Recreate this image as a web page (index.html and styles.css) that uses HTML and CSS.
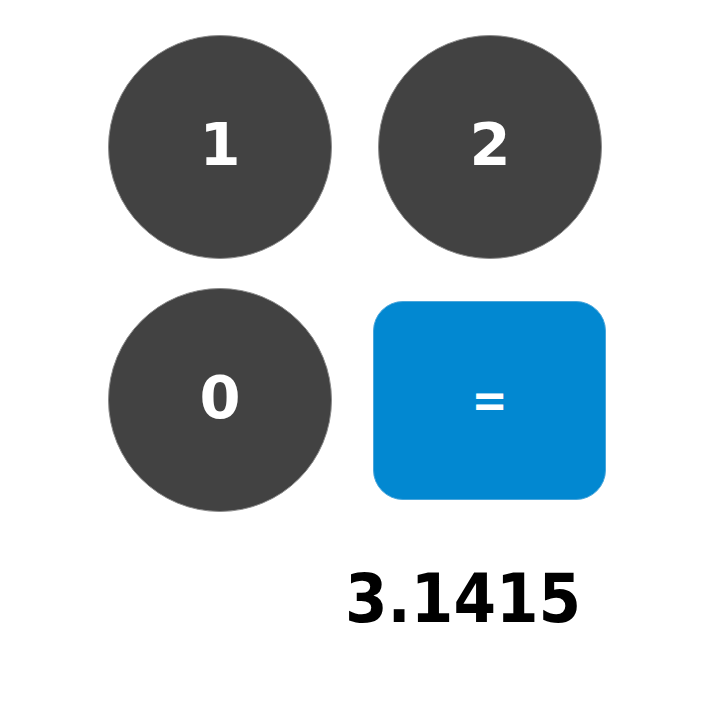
FILE: index.html
```html
<!DOCTYPE html>
<html>
<head>
<meta charset="utf-8">
<link rel="stylesheet" href="styles.css">
</head>
<body>
<div class="calc">
  <div class="row">
    <button class="key num">1</button>
    <button class="key num">2</button>
  </div>
  <div class="row">
    <button class="key num">0</button>
    <button class="key eq">=</button>
  </div>
  <div class="result">3.1415</div>
</div>
</body>
</html>
```
FILE: styles.css
```css
html, body {
  margin: 0;
  padding: 0;
  background: #ffffff;
}
.calc {
  padding: 35px 0 0 108px;
  display: flex;
  flex-direction: column;
  gap: 29px;
  font-family: "DejaVu Sans Condensed", "DejaVu Sans", sans-serif;
}
.row {
  display: flex;
  gap: 46px;
  align-items: center;
}
.key {
  margin: 0;
  padding: 0;
  display: flex;
  align-items: center;
  justify-content: center;
  color: #ffffff;
  font-weight: bold;
  line-height: 1;
  box-sizing: border-box;
}
.num {
  width: 224px;
  height: 224px;
  border-radius: 50%;
  background: #424242;
  border: 1px solid #8c8c8c;
  padding-bottom: 6px;
  font-family: "DejaVu Sans", sans-serif;
  font-size: 59px;
}
.eq {
  width: 233px;
  height: 199px;
  margin: 0 -4px 0 -5px;
  border-radius: 30px;
  background: #0288d1;
  border: 1px solid #4aa6dc;
  font-family: "DejaVu Sans Condensed", "DejaVu Sans", sans-serif;
  font-size: 48px;
}
.result {
  margin: 24px 0 0 237px;
  font-weight: bold;
  font-size: 68px;
  line-height: 1;
  color: #000000;
}
```
